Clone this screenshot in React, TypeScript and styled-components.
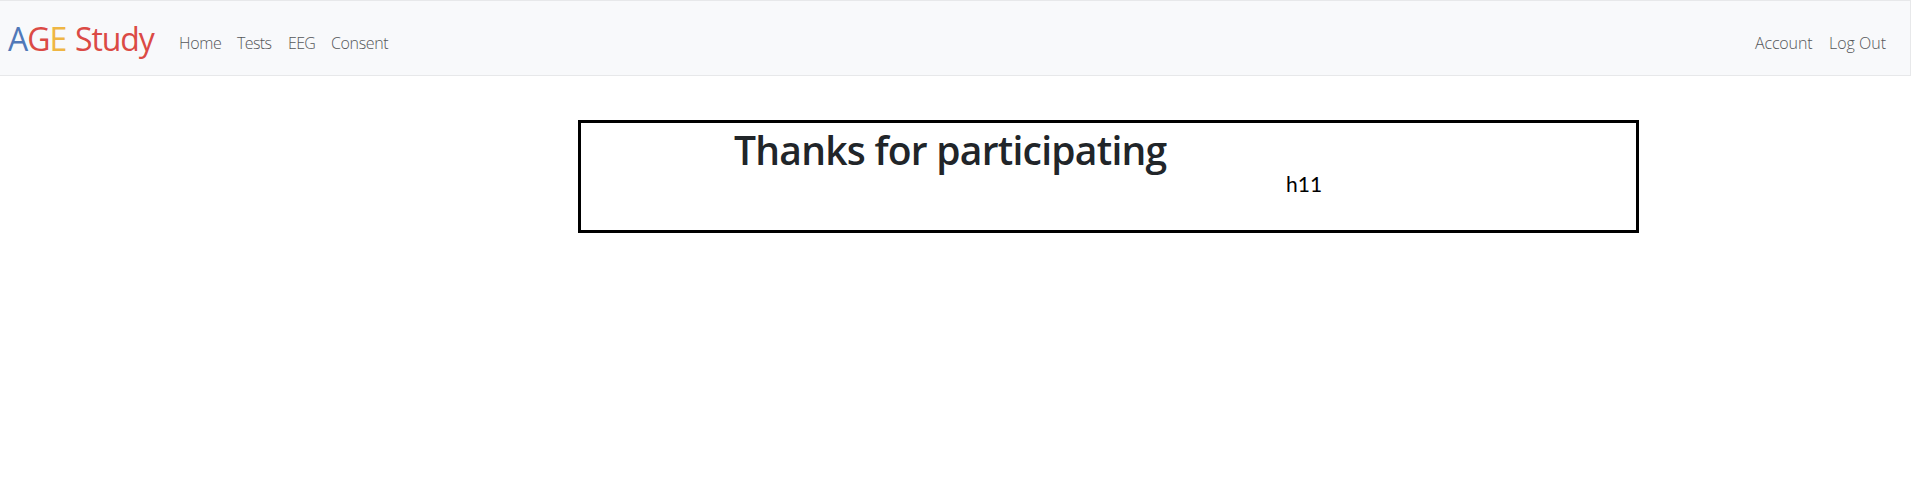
import React from "react";
import styled, { createGlobalStyle } from "styled-components";

const GlobalStyle = createGlobalStyle`
  *, *::before, *::after { box-sizing: border-box; }
  body {
    margin: 0;
    background: #fff;
    color: #212529;
    font-family: "Segoe UI", "Open Sans", "Noto Sans", sans-serif;
    font-size: 16px;
    line-height: 1.5;
  }
`;

const Navbar = styled.nav`
  display: flex;
  align-items: center;
  height: 76px;
  padding: 0 24px 0 8px;
  background: #f8f9fb;
  border: 1px solid #e7e8ea;
  border-left: 0;
`;

const Brand = styled.a`
  width: 171px;
  padding-top: 2px;
  font-size: 32px;
  line-height: 48px;
  letter-spacing: -1.05px;
  word-spacing: 1.5px;
  white-space: nowrap;
  color: #db4a45;
`;

const Letter = styled.span<{ $color: string }>`
  color: ${(p) => p.$color};
`;

const NavList = styled.ul<{ $end?: boolean }>`
  display: flex;
  margin: 0 0 0 ${(p) => (p.$end ? "auto" : "0")};
  padding: 9px 0 0;
  list-style: none;
`;

const NavItem = styled.li<{ $width: number; $spacing?: number }>`
  width: ${(p) => p.$width}px;
  color: #55575a;
  font-weight: 300;
  letter-spacing: ${(p) => p.$spacing ?? 0}px;
  white-space: nowrap;
`;

const Panel = styled.main`
  width: 1061px;
  height: 113px;
  margin: 44px 0 0 578px;
  padding: 3px 0 0 153px;
  border: 3px solid #000;
`;

const Title = styled.h1`
  margin: 0;
  font-size: 39px;
  font-weight: 600;
  line-height: 48px;
  letter-spacing: -0.75px;
  white-space: nowrap;
`;

const Code = styled.p`
  margin: -4px 0 0 552px;
  color: #000;
  font-family: Lato, sans-serif;
  font-size: 21px;
  line-height: 28px;
`;

export default function App() {
  return (
    <>
      <GlobalStyle />
      <Navbar>
        <Brand>
          <Letter $color="#5079b9">A</Letter>
          <Letter $color="#db4a45">G</Letter>
          <Letter $color="#efb644">E</Letter> Study
        </Brand>
        <NavList>
          <NavItem $width={58} $spacing={-0.3}>Home</NavItem>
          <NavItem $width={51} $spacing={-0.6}>Tests</NavItem>
          <NavItem $width={43} $spacing={-0.7}>EEG</NavItem>
          <NavItem $width={58} $spacing={-0.35}>Consent</NavItem>
        </NavList>
        <NavList $end>
          <NavItem $width={74} $spacing={-0.15}>Account</NavItem>
          <NavItem $width={57}>Log Out</NavItem>
        </NavList>
      </Navbar>
      <Panel>
        <Title>Thanks for participating</Title>
        <Code>h11</Code>
      </Panel>
    </>
  );
}
